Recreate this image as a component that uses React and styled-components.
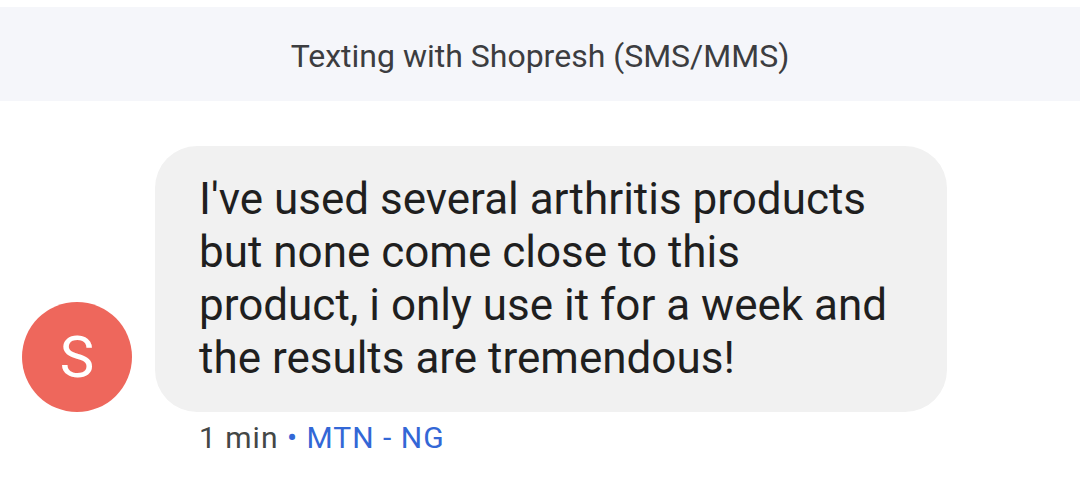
import React from 'react';
import styled, { createGlobalStyle } from 'styled-components';

const GlobalStyle = createGlobalStyle`
  html, body {
    margin: 0;
    padding: 0;
    background: #ffffff;
  }
  body {
    font-family: Roboto, "Noto Sans", sans-serif;
  }
`;

const Page = styled.div`
  width: 1080px;
  height: 488px;
  padding-top: 7px;
  box-sizing: border-box;
  background: #ffffff;
  overflow: hidden;
`;

const Header = styled.div`
  height: 94px;
  box-sizing: border-box;
  padding-top: 3px;
  background: #f5f6fa;
  display: flex;
  align-items: center;
  justify-content: center;
  font-size: 32px;
  color: #3c3d40;
`;

const Thread = styled.div`
  padding: 45px 0 0 22px;
`;

const Row = styled.div`
  display: flex;
  align-items: flex-end;
  gap: 23px;
`;

const Avatar = styled.div`
  width: 110px;
  height: 110px;
  border-radius: 50%;
  background: ${({ color }) => color};
  color: #ffffff;
  display: flex;
  align-items: center;
  justify-content: center;
  font-size: 58px;
  flex-shrink: 0;
`;

const Bubble = styled.div`
  width: 792px;
  box-sizing: border-box;
  padding: 27px 20px 27px 44px;
  background: #f1f1f1;
  border-radius: 42px;
  font-size: 44px;
  line-height: 53px;
  color: #1f1f1f;
`;

const Meta = styled.div`
  margin: 8px 0 0 177px;
  font-size: 30px;
  color: #444746;
  letter-spacing: 1px;
`;

const Carrier = styled.span`
  color: #3367d6;
`;

export default function App() {
  return (
    <>
      <GlobalStyle />
      <Page>
        <Header>Texting with Shopresh (SMS/MMS)</Header>
        <Thread>
          <Row>
            <Avatar color="#ee675c">S</Avatar>
            <Bubble>
              I've used several arthritis products
              <br />
              but none come close to this
              <br />
              product, i only use it for a week and
              <br />
              the results are tremendous!
            </Bubble>
          </Row>
          <Meta>
            1 min <Carrier>• MTN - NG</Carrier>
          </Meta>
        </Thread>
      </Page>
    </>
  );
}
